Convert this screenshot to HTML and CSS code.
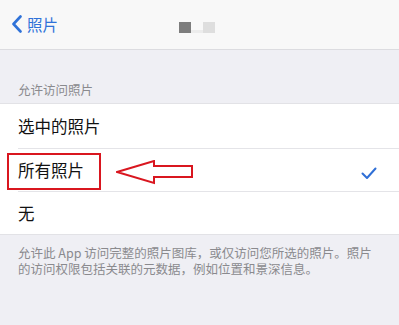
FILE: index.html
```html
<!DOCTYPE html>
<html lang="zh-CN">
<head>
<meta charset="utf-8">
<link rel="stylesheet" href="styles.css">
</head>
<body>
<div class="screen">
  <header class="nav">
    <div class="back">
      <svg class="chev" width="12" height="18" viewBox="0 0 12 18"><polyline points="9.5,1.5 2.5,9 9.5,16.5" fill="none" stroke="#2f72d8" stroke-width="2.6" stroke-linecap="round" stroke-linejoin="round"/></svg>
      <span class="back-label">照片</span>
    </div>
    <div class="title">
      <span class="blk dark"></span>
      <span class="dots"></span>
      <span class="blk light"></span>
    </div>
  </header>
  <div class="sec-head">允许访问照片</div>
  <div class="list">
    <div class="row first"><span class="label">选中的照片</span></div>
    <div class="row marked">
      <span class="label">所有照片</span>
      <svg class="check" width="16" height="14" viewBox="0 0 16 14"><polyline points="1.5,6.5 6,11 14.5,1.5" fill="none" stroke="#2f6fd6" stroke-width="2" stroke-linecap="round" stroke-linejoin="round"/></svg>
      <span class="redbox"></span>
      <svg class="arrow" width="80" height="26" viewBox="0 0 80 26"><polygon points="1,12 38,1 38,6 76,6 76,17 38,17 38,23" fill="#fff" stroke="#d9161f" stroke-width="2" stroke-linejoin="miter"/></svg>
    </div>
    <div class="row last"><span class="label">无</span></div>
  </div>
  <p class="foot">允许此 App 访问完整的照片图库，或仅访问您所选的照片。照片的访问权限包括关联的元数据，例如位置和景深信息。</p>
</div>
</body>
</html>
```
FILE: styles.css
```css
* { box-sizing: border-box; }
html, body { margin: 0; padding: 0; }
body {
  width: 399px;
  height: 325px;
  overflow: hidden;
  background: #efeff4;
  font-family: "Noto Sans CJK SC", "Noto Sans", sans-serif;
}
.screen { display: flex; flex-direction: column; height: 325px; }
.nav {
  height: 50px;
  background: #f8f8f8;
  border-bottom: 1px solid #dcdce0;
  position: relative;
  display: flex;
  align-items: center;
  padding-left: 11px;
}
.back { display: flex; align-items: center; gap: 4px; margin-top: -2px; }
.chev { display: block; }
.back-label { color: #2f72d8; font-size: 15.5px; line-height: 20px; }
.title {
  position: absolute;
  left: 179px;
  top: 22px;
  display: flex;
  align-items: flex-end;
  gap: 0;
}
.blk { width: 12px; height: 11px; display: block; }
.blk.dark { background: #7d7d7d; }
.blk.light { background: #dedede; }
.dots { width: 12px; height: 3px; background: #ececec; margin-bottom: 0; }
.sec-head {
  height: 53px;
  padding: 32px 0 0 18px;
  font-size: 12.5px;
  line-height: 16px;
  color: #8a8a8e;
}
.list {
  background: #fff;
  border-top: 1px solid #e2e2e6;
  border-bottom: 1px solid #e2e2e6;
}
.row {
  height: 43px;
  display: flex;
  align-items: center;
  padding-left: 18px;
  position: relative;
}
.row.first { height: 44px; }
.row + .row::before {
  content: "";
  position: absolute;
  left: 18px;
  right: 0;
  top: 0;
  height: 1px;
  background: #e4e4e8;
}
.label { font-size: 16.5px; color: #111; line-height: 20px; }
.check { position: absolute; left: 361px; top: 19px; }
.redbox {
  position: absolute;
  left: 7px;
  top: 5px;
  width: 94px;
  height: 37px;
  border: 2px solid #d9161f;
}
.arrow { position: absolute; left: 116px; top: 12px; }
.foot {
  margin: 0;
  padding: 10px 18px 0 18px;
  font-size: 12.5px;
  line-height: 15.5px;
  color: #8a8a8e;
}
```
